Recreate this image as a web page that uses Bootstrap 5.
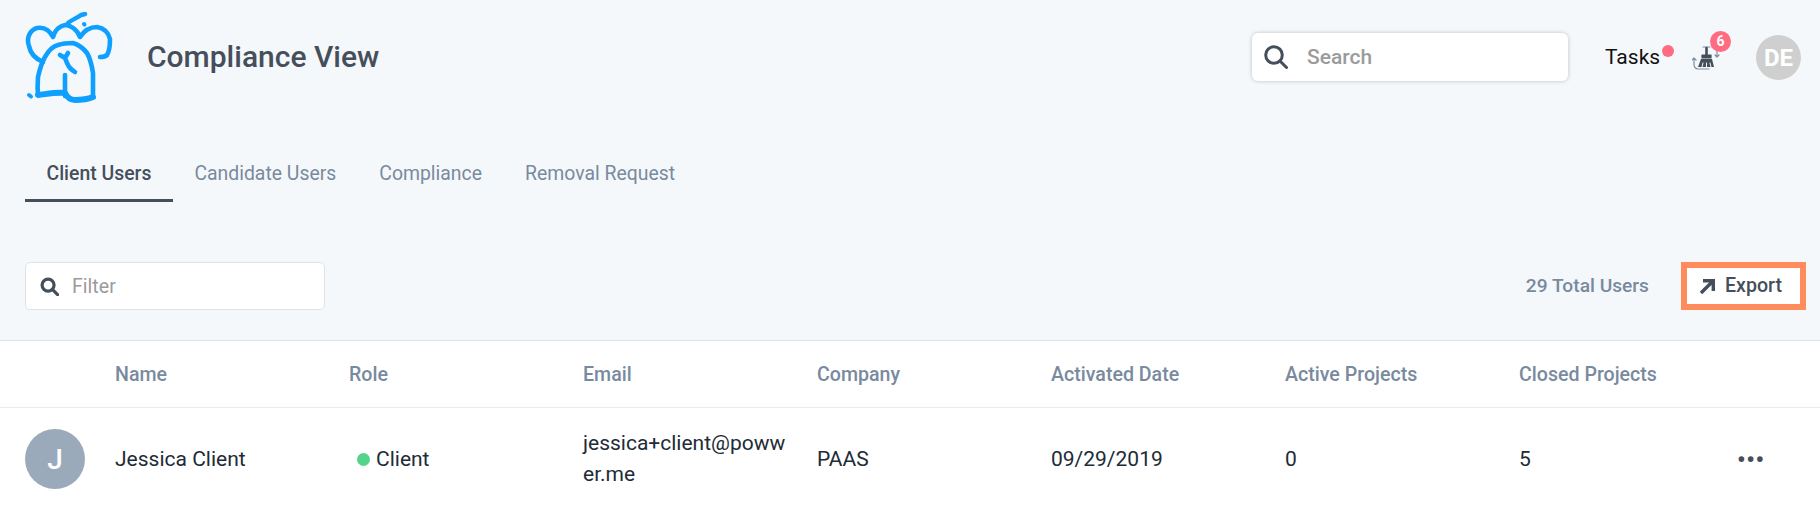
<!DOCTYPE html>
<html lang="en">
<head>
<meta charset="utf-8">
<title>Compliance View</title>
<link href="https://cdn.jsdelivr.net/npm/bootstrap@5.3.0/dist/css/bootstrap.min.css" rel="stylesheet">
<style>
html,body{height:512px;overflow:hidden}
body{font-family:Roboto,"Liberation Sans",sans-serif;background:#fff;color:#212b36;font-size:18px}
.top-zone{background:#f5f8fb;height:341px;border-bottom:1px solid #dfe3e8;display:flex;flex-direction:column}
.head-bar{height:114px;padding:12px 19px 0 24px}
.logo-svg{width:90px;height:95px;flex:none}
.page-title{font-size:30px;font-weight:500;color:#454f5b;margin:22px 0 0 33px}
.search-box{width:316px;height:48px;margin-top:21px;background:#fff;border-radius:6px;box-shadow:0 0 4px rgba(0,0,0,.22);padding:2px 0 0 12px;margin-right:37px}
.search-box svg{width:24px;height:24px;flex:none;margin-top:-2px}
.search-txt{font-size:21px;font-weight:500;color:#9b9b9b;margin-left:19px}
.tasks-wrap{margin-top:21px;padding-top:2px;font-size:21px;color:#111;height:48px;width:69px}
.tasks-dot{width:12px;height:12px;border-radius:50%;background:#ff6b81;position:absolute;right:0;top:12px}
.broom-wrap{width:40px;height:40px;margin:19px 0 0 18px}
.broom-wrap svg{width:40px;height:40px;display:block}
.broom-count{position:absolute;left:18px;top:0;width:21px;height:21px;border-radius:50%;background:#ff6b81;color:#fff;font-size:14px;font-weight:700;text-align:center;line-height:21px}
.user-chip{width:45px;height:45px;border-radius:50%;background:#cfcfcf;color:#fff;font-size:24px;font-weight:700;margin:23px 0 0 24px;flex:none}
.tab-row{padding-left:25px;height:60px;margin-top:26px}
.tab-item{font-size:19.4px;font-weight:400;color:#798a9e;padding:0 21.5px;height:59px;line-height:68px;text-decoration:none}
.tab-on{color:#454f5b;font-weight:500;border-bottom:3px solid #454f5b;height:62px}
.tool-row{padding:0 24px 0 25px}
.tool-row-inner{height:52px;margin-top:60px}
.filter-box{width:300px;height:48px;background:#fff;border:1px solid #dfe3e8;border-radius:5px;padding:2px 0 0 14px}
.filter-box svg{width:19px;height:19px;flex:none;margin-top:-2px}
.filter-txt{font-size:19.6px;color:#9b9b9b;margin-left:13px}
.total-txt{font-size:19.2px;font-weight:500;color:#798a9e;margin-right:32px}
.export-btn{width:125px;height:48px;background:#fff;border:6px solid #ff8c5a;color:#454f5b;font-size:19.6px;font-weight:500;margin-right:-10px;padding:0 0 0 12px}
.export-btn svg{width:17px;height:17px;margin-right:9px;flex:none}
.user-table{table-layout:fixed;width:1820px;margin:0}
.user-table th{font-size:19.6px;font-weight:500;color:#798a9e;height:66px;vertical-align:middle;padding:2px 8px 0 0;border-bottom:1px solid #e9ecef}
.user-table td{font-size:21px;color:#212b36;height:102px;vertical-align:middle;padding:2px 8px 0 0;border:0;line-height:31px;word-break:break-all}
.user-table td.mail-cell{padding-right:24px}
.c-av{width:115px}.c-n{width:234px}.c-end{width:67px}
.user-pic{width:60px;height:60px;margin-left:25px;border-radius:50%;background:#9baabb;color:#fff;font-size:28px;font-weight:500}
.role-dot{width:13px;height:13px;border-radius:50%;background:#54d38a;display:inline-block;margin:0 6px 0 8px}
.dots-btn{color:#454f5b;font-size:24px;line-height:1;letter-spacing:.6px;font-weight:700;margin-left:-16px;display:inline-block;position:relative;top:2px}
</style>
</head>
<body>
<div class="top-zone">
  <div class="head-bar d-flex align-items-start">
    <svg class="logo-svg" viewBox="24 12 90 95" fill="none" stroke="#0f9fff" stroke-width="4.6" stroke-linecap="round" stroke-linejoin="round">
      <path d="M43 62C34 58 30 52 29 46 26 38 30 30 37 28 43 27 49 29 53 37 55 30 60 26 65 25 70 25 77 29 80 37 84 31 90 27 97 27 103 28 108 31 110 39 110 47 109 52 107 55 105 57 103 57 100 57"/>
      <path d="M38 95C37 86 38 80 38 77 40 68 42 62 45 57 49 50 53 46 58 45 64 43 69 43 73 43 79 45 84 49 87 53 91 60 92 67 93 73 93 82 93 90 93 97"/>
      <path d="M65 96V75"/>
      <path d="M60 55L65 58 68 53M65 58C67 63 68 66 70 68 72 70 73 71 75 72" stroke-width="4.6"/>
      <path d="M38 95C47 94 56 92 65 93 67 97 70 100 75 100 81 100 88 99 93 97" stroke-width="6"/>
      <path d="M68 23C71 20 77 18 81 15L85 14" stroke-width="4.4"/>
      <path d="M84 24L84.5 24.5" stroke-width="4"/>
      <path d="M29 95L31 96.5" stroke-width="4"/>
    </svg>
    <h1 class="page-title lh-base">Compliance View</h1>
    <div class="search-box d-flex align-items-center ms-auto">
      <svg viewBox="0 0 24 24" fill="none" stroke="#454f5b" stroke-width="3"><circle cx="10" cy="10" r="8.3"/><path d="M16 16l6.5 6.5" stroke-linecap="round"/></svg>
      <span class="search-txt">Search</span>
    </div>
    <div class="tasks-wrap position-relative d-flex align-items-center">Tasks<span class="tasks-dot"></span></div>
    <div class="broom-wrap position-relative">
      <svg viewBox="0 0 40 40" fill="none" stroke="#7b8ea3" stroke-width="1.2" stroke-linecap="round" stroke-linejoin="round">
        <path d="M11 16h7M20 16h5v10M23 24l2 2 2-2M2 27v7c0 2 2 4 4 4h11M0 29l2-2 2 2"/>
        <path d="M14.5 17v7" stroke="#454f5b" stroke-width="2.6"/>
        <path d="M10 24h9v3h-9z" fill="#454f5b" stroke="#454f5b"/>
        <path d="M9 28h11l2 8H6z" fill="#454f5b" stroke="none"/>
        <path d="M11 32l-1 4M14.5 32v4M18 32l1 4" stroke="#f5f8fb" stroke-width="1"/>
      </svg>
      <span class="broom-count">6</span>
    </div>
    <div class="user-chip d-flex align-items-center justify-content-center">DE</div>
  </div>
  <div class="tab-row d-flex align-items-start">
    <a class="tab-item tab-on" href="#">Client Users</a>
    <a class="tab-item" href="#">Candidate Users</a>
    <a class="tab-item" href="#">Compliance</a>
    <a class="tab-item" href="#">Removal Request</a>
  </div>
  <div class="tool-row">
    <div class="tool-row-inner d-flex align-items-center">
      <div class="filter-box d-flex align-items-center">
        <svg viewBox="0 0 20 20" fill="none" stroke="#454f5b" stroke-width="3.4"><circle cx="8.5" cy="8.5" r="6.3"/><path d="M13 13l5.5 5.5" stroke-linecap="round"/></svg>
        <span class="filter-txt">Filter</span>
      </div>
      <span class="total-txt ms-auto">29 Total Users</span>
      <div class="export-btn d-flex align-items-center">
        <svg viewBox="0 0 17 17" fill="none" stroke="#454f5b" stroke-width="3.4"><path d="M2 15L14 3M4 2.7h10.3V13"/></svg>
        <span>Export</span>
      </div>
    </div>
  </div>
</div>
<table class="table user-table">
  <colgroup><col class="c-av"><col class="c-n"><col class="c-n"><col class="c-n"><col class="c-n"><col class="c-n"><col class="c-n"><col class="c-n"><col class="c-end"></colgroup>
  <thead><tr><th></th><th>Name</th><th>Role</th><th>Email</th><th>Company</th><th>Activated Date</th><th>Active Projects</th><th>Closed Projects</th><th></th></tr></thead>
  <tbody><tr>
    <td><div class="user-pic d-flex align-items-center justify-content-center">J</div></td>
    <td>Jessica Client</td>
    <td><span class="role-dot"></span>Client</td>
    <td class="mail-cell">jessica+client@powwer.me</td>
    <td>PAAS</td>
    <td>09/29/2019</td>
    <td>0</td>
    <td>5</td>
    <td><span class="dots-btn">•••</span></td>
  </tr></tbody>
</table>
</body>
</html>
